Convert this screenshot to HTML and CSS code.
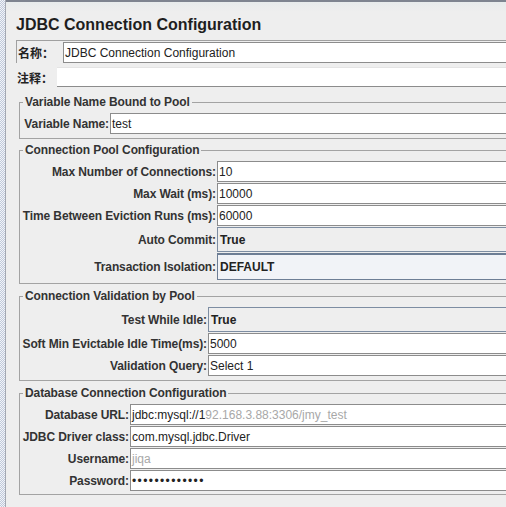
FILE: index.html
```html
<!DOCTYPE html>
<html lang="zh">
<head>
<meta charset="utf-8">
<title>JDBC Connection Configuration</title>
<link rel="stylesheet" href="styles.css">
</head>
<body>
<div class="app">
  <div class="strip"></div>
  <div class="main">
    <h1 class="title">JDBC Connection Configuration</h1>
    <div class="panel">
      <div class="name-row">
        <span class="cjk-label name-label">名称：</span>
        <div class="field name-field">JDBC Connection Configuration</div>
      </div>
      <div class="comment-row">
        <span class="cjk-label comment-label">注释：</span>
        <div class="comment-field"></div>
      </div>

      <fieldset class="group group-var">
        <legend>Variable Name Bound to Pool</legend>
        <div class="form form-var">
          <div class="lbl">Variable Name:</div><div class="field">test</div>
        </div>
      </fieldset>

      <fieldset class="group group-pool">
        <legend>Connection Pool Configuration</legend>
        <div class="form form-pool">
          <div class="lbl">Max Number of Connections:</div><div class="field">10</div>
          <div class="lbl">Max Wait (ms):</div><div class="field">10000</div>
          <div class="lbl">Time Between Eviction Runs (ms):</div><div class="field">60000</div>
          <div class="lbl">Auto Commit:</div><div class="combo">True</div>
          <div class="lbl">Transaction Isolation:</div><div class="combo focused">DEFAULT</div>
        </div>
      </fieldset>

      <fieldset class="group group-val">
        <legend>Connection Validation by Pool</legend>
        <div class="form form-val">
          <div class="lbl">Test While Idle:</div><div class="combo">True</div>
          <div class="lbl">Soft Min Evictable Idle Time(ms):</div><div class="field">5000</div>
          <div class="lbl">Validation Query:</div><div class="field">Select 1</div>
        </div>
      </fieldset>

      <fieldset class="group group-db">
        <legend>Database Connection Configuration</legend>
        <div class="form form-db">
          <div class="lbl">Database URL:</div><div class="field">jdbc:mysql://1<span class="faint">92.168.3.88:3306/jmy_test</span></div>
          <div class="lbl">JDBC Driver class:</div><div class="field">com.mysql.jdbc.Driver</div>
          <div class="lbl">Username:</div><div class="field"><span class="faint">jiqa</span></div>
          <div class="lbl">Password:</div><div class="field"><span class="dots">•••••••••••••</span></div>
        </div>
      </fieldset>
    </div>
  </div>
</div>
</body>
</html>
```

FILE: styles.css
```css
html, body {
  margin: 0;
  padding: 0;
}

body {
  width: 506px;
  height: 507px;
  overflow: hidden;
  background: #eeeeee;
  font-family: "Liberation Sans", Arial, sans-serif;
  font-size: 12px;
  color: #333333;
}

.app {
  display: flex;
  height: 507px;
}

.strip {
  flex: none;
  width: 5px;
  border-right: 1px solid #a4a8b2;
  background: conic-gradient(#c0c9db 25%, #f2f4f8 0 50%, #c0c9db 0 75%, #f2f4f8 0) 0 0 / 2px 2px;
}

.main {
  flex: none;
  width: 580px;
  border-top: 2px solid #7e8490;
  padding-left: 10px;
  background: linear-gradient(#e7ebec, #eeeeee 10px);
}

.title {
  margin: 0 0 5px 0;
  padding-top: 13px;
  height: 20px;
  line-height: 20px;
  font-size: 16px;
  font-weight: bold;
  color: #1e1e1e;
  white-space: nowrap;
}

.cjk-label {
  font-family: "Liberation Sans", "Noto Sans CJK SC", sans-serif;
  font-weight: bold;
  font-size: 12px;
  color: #222222;
  display: flex;
  align-items: center;
  flex: none;
}

.name-row {
  display: flex;
  border-top: 1px solid #a0a0a0;
  border-left: 1px solid #a0a0a0;
  padding: 1px 0 0 1px;
}

.name-label {
  width: 45px;
}

.name-field {
  flex: 1;
  height: 22px;
}

.comment-row {
  display: flex;
  margin-top: 4px;
  padding-left: 1px;
}

.comment-label {
  width: 40px;
}

.comment-field {
  flex: 1;
  height: 20px;
  box-sizing: border-box;
  background: #ffffff;
  border-top: 1px solid #e4e4e4;
  border-bottom: 1px solid #8c8c8c;
}

.group {
  margin: 0 0 0 3px;
  padding: 4px 3px 4px 3px;
  border: 1px solid #a3a3a3;
  min-inline-size: 0;
}

.group legend {
  padding: 0 2px;
  font-weight: bold;
  font-size: 12px;
  line-height: 14px;
  color: #333333;
  white-space: nowrap;
  letter-spacing: -0.1px;
}

.group-var {
  margin-top: 8px;
}

.group-pool {
  margin-top: 4px;
  padding-bottom: 3px;
}

.group-val {
  margin-top: 5px;
}

.group-db {
  margin-top: 5px;
  padding-bottom: 3px;
}

.form {
  display: grid;
  row-gap: 1px;
}

.form-var { grid-template-columns: 87px 1fr; }
.form-pool { grid-template-columns: 194px 1fr; }
.form-val { grid-template-columns: 185px 1fr; }
.form-db { grid-template-columns: 107px 1fr; }

.lbl {
  display: flex;
  justify-content: flex-end;
  align-items: center;
  white-space: nowrap;
  font-weight: bold;
  color: #333333;
  padding-right: 1px;
  letter-spacing: -0.1px;
}

.field {
  box-sizing: border-box;
  height: 21px;
  background: #ffffff;
  border: 1px solid #8c8c8c;
  padding-left: 1px;
  display: flex;
  align-items: center;
  white-space: nowrap;
  overflow: hidden;
  color: #222222;
  font-size: 12px;
}

.combo {
  box-sizing: border-box;
  height: 25px;
  background: #eeeeee;
  border: 1px solid #7d8da2;
  padding-left: 2px;
  display: flex;
  align-items: center;
  font-weight: bold;
  color: #222222;
  white-space: nowrap;
}

.combo.focused {
  height: 27px;
  border-color: #6d7e95;
  border-top-width: 2px;
  background: #f1f3f7;
}

.faint {
  color: #a8a8a8;
}

.dots {
  letter-spacing: 1.4px;
  font-size: 12px;
  color: #222222;
}
```
